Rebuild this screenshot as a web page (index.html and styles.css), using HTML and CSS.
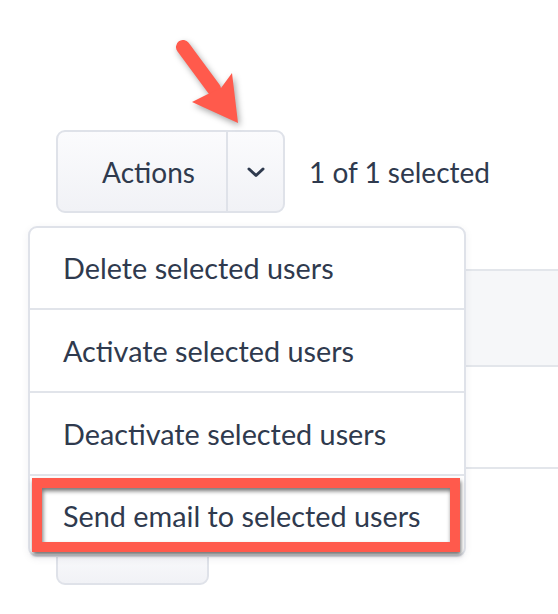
FILE: index.html
```html
<!DOCTYPE html>
<html lang="en">
<head>
<meta charset="utf-8">
<title>Bulk actions</title>
<link rel="stylesheet" href="styles.css">
</head>
<body>
<div class="page">
  <div class="toolbar">
    <div class="btn-group">
      <button class="btn-main">Actions</button>
      <button class="btn-caret" aria-label="Open actions">
        <svg width="18" height="12" viewBox="0 0 18 12"><polyline points="2,3 9,9.5 16,3" fill="none" stroke="#2f3a4e" stroke-width="3" stroke-linecap="round" stroke-linejoin="round"/></svg>
      </button>
    </div>
    <span class="count">1 of 1 selected</span>
    <ul class="menu">
      <li class="menu-item">Delete selected users</li>
      <li class="menu-item">Activate selected users</li>
      <li class="menu-item">Deactivate selected users</li>
      <li class="menu-item menu-item-highlight">Send email to selected users</li>
    </ul>
  </div>
  <div class="table">
    <div class="row row-top"></div>
    <div class="row row-shaded"></div>
    <div class="row row-plain"></div>
  </div>
  <div class="footer">
    <button class="btn-more"></button>
  </div>
  <svg class="annot-arrow" width="300" height="150" viewBox="0 0 300 150">
    <g class="arrow-shape">
      <line x1="183" y1="47" x2="214" y2="89" stroke="#ff5a4c" stroke-width="14" stroke-linecap="round"/>
      <polygon points="238,123 232,73 221,88 208,94 192,102" fill="#ff5a4c"/>
    </g>
  </svg>
</div>
</body>
</html>
```
FILE: styles.css
```css
* { box-sizing: border-box; }
html, body { margin: 0; padding: 0; background: #ffffff; }
body {
  font-family: "Lato", "Source Sans Pro", "Liberation Sans", sans-serif;
  color: #2f3a4e;
  width: 558px;
  height: 614px;
  overflow: hidden;
}
.page {
  position: relative;
  width: 558px;
  height: 614px;
  padding-top: 130px;
}

.toolbar {
  position: relative;
  padding-left: 56px;
  display: flex;
  align-items: center;
  height: 83px;
  z-index: 2;
}
.btn-group {
  display: flex;
  height: 83px;
  border: 2px solid #dfe2e9;
  border-radius: 9px;
  background: linear-gradient(#fbfbfd, #f1f2f6);
  overflow: hidden;
}
.btn-group button {
  font: inherit;
  color: inherit;
  background: transparent;
  border: 0;
  margin: 0;
  padding: 0;
  display: flex;
  align-items: center;
  justify-content: center;
}
.btn-main {
  width: 170px;
  font-size: 28px !important;
  padding-left: 13px !important;
  border-right: 2px solid #dfe2e9 !important;
}
.btn-caret { width: 55px; }
.count {
  margin-left: 24px;
  font-size: 28px;
}

.menu {
  position: absolute;
  left: 28px;
  top: 96px;
  width: 438px;
  margin: 0;
  padding: 0;
  list-style: none;
  background: #fff;
  border: 2px solid #dfe2e9;
  border-radius: 9px;
  box-shadow: 0 2px 8px rgba(30, 40, 60, 0.06);
}
.menu-item {
  position: relative;
  height: 83px;
  padding-left: 33px;
  display: flex;
  align-items: center;
  font-size: 28.8px;
  border-bottom: 2px solid #e1e4ea;
}
.menu-item:first-child { height: 82px; }
.menu-item:last-child { border-bottom: 0; height: 79px; }
.menu-item-highlight::after {
  content: "";
  position: absolute;
  left: 2px;
  top: 2px;
  right: 4px;
  bottom: 3px;
  border: 10px solid #ff5a4c;
  box-shadow: 1px 3px 4px rgba(0, 0, 0, 0.55), inset 1px 3px 4px rgba(0, 0, 0, 0.55);
}

.table { margin-left: 40px; }
.row-top { height: 56px; }
.row-shaded {
  height: 98px;
  background: #f6f7f9;
  border-top: 2px solid #e3e6eb;
  border-bottom: 2px solid #e3e6eb;
}
.row-plain {
  height: 102px;
  border-bottom: 2px solid #e3e6eb;
}
.footer { padding-left: 56px; margin-top: 76px; }
.btn-more {
  display: block;
  width: 153px;
  height: 40px;
  border: 2px solid #dfe2e9;
  border-radius: 9px;
  background: linear-gradient(#fbfbfd, #f1f2f6);
  padding: 0;
}

.annot-arrow {
  position: absolute;
  left: 0;
  top: 0;
  z-index: 3;
  overflow: visible;
}
.arrow-shape { filter: drop-shadow(2px 3px 3px rgba(0, 0, 0, 0.35)); }
```
